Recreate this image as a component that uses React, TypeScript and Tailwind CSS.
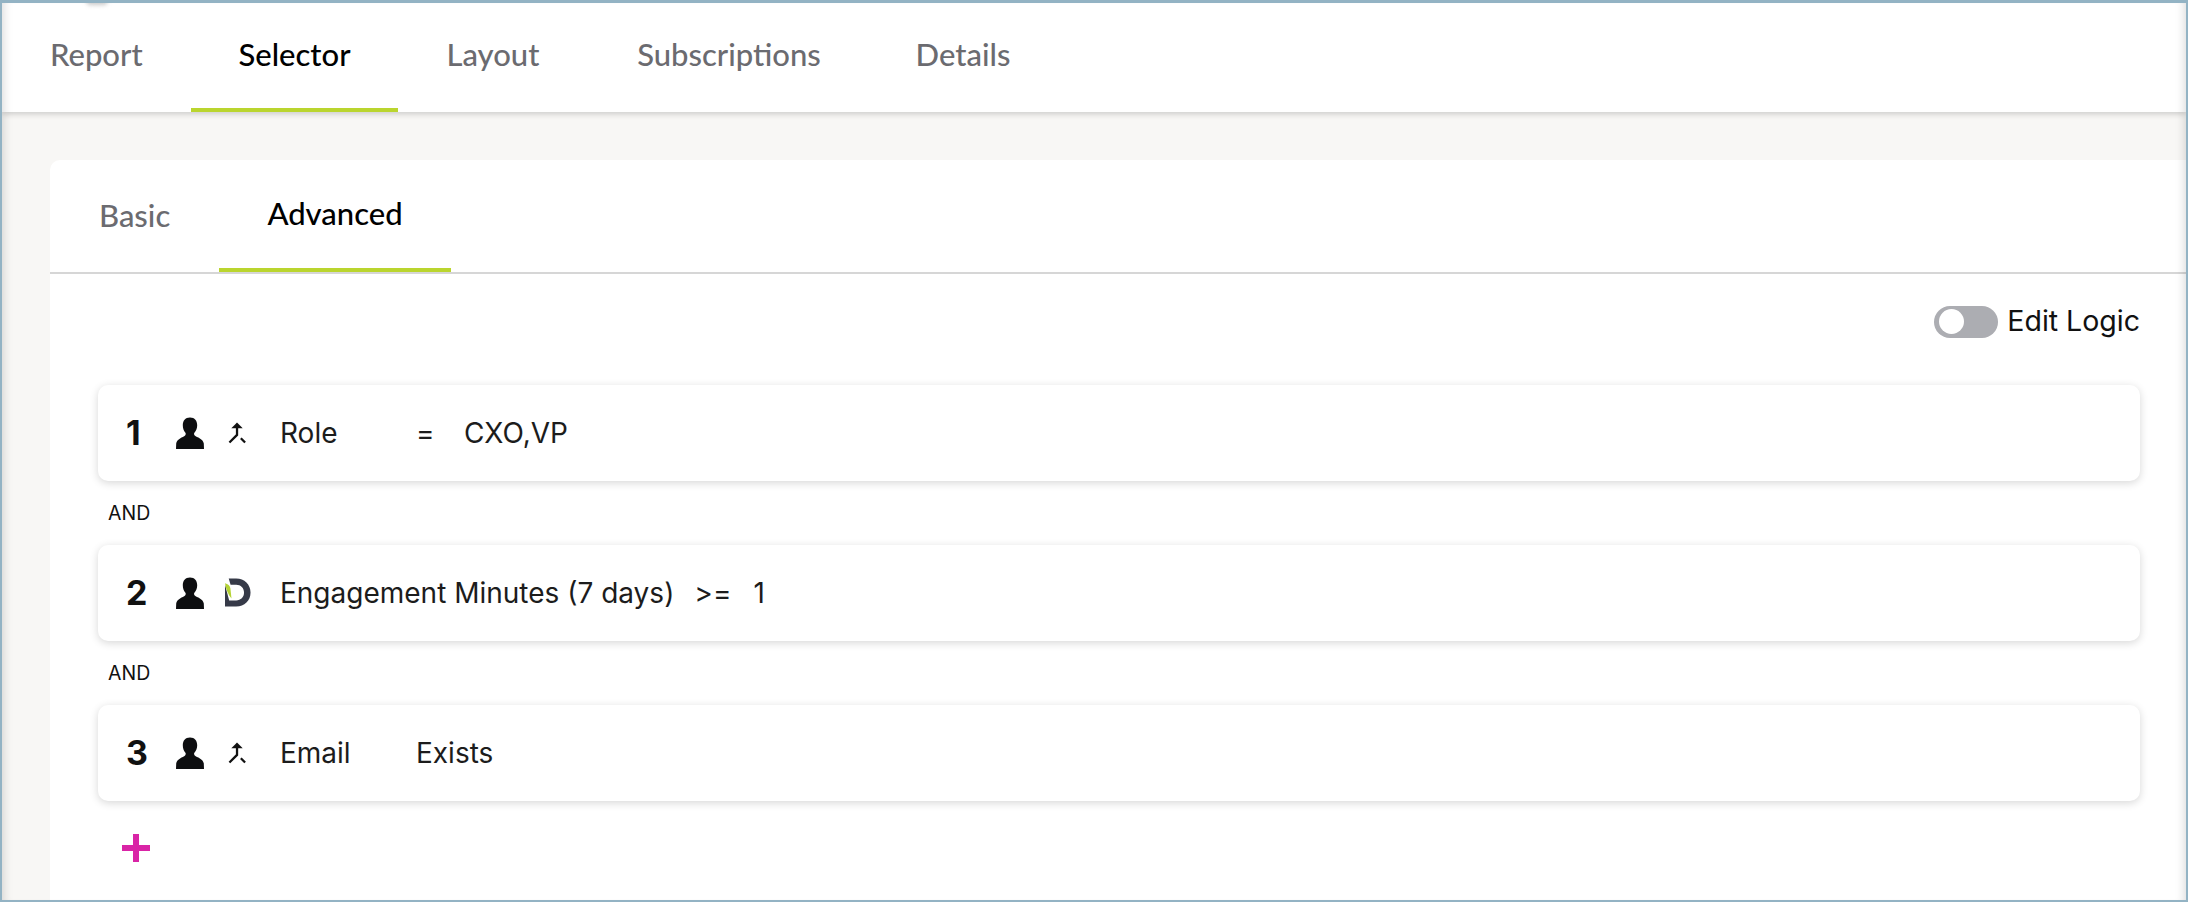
const PersonIcon = () => (
  <svg width="28" height="32" viewBox="0 0 28 32" className="shrink-0">
    <path d="M14 0.500c-4.800 0-7.200 3.200-7.200 7.800 0 3 1 5.700 2.600 7.400 0.500 0.600 0.500 2-0.300 2.700C7 20.300 0.800 21.600 0.200 26.500L0 32h28l-0.200-5.500c-0.600-4.900-6.800-6.200-9.100-8.100-0.800-0.700-0.800-2.100-0.300-2.700 1.600-1.700 2.800-4.400 2.800-7.400 0-4.600-2.400-7.800-7.200-7.800z" fill="#0d0e10" />
  </svg>
);

const MergeIcon = () => (
  <svg width="19" height="23" viewBox="0 0 20 24" className="ml-[2px] shrink-0">
    <path d="M9.500 0.500 L15.500 6.500 H3.500 Z" fill="#111" />
    <path d="M9.500 5 V13.500 L1.500 21.500 M13.500 17 L18 21.500" fill="none" stroke="#111" strokeWidth="2.400" />
  </svg>
);

const LogoIcon = () => (
  <svg width="26" height="30" viewBox="0 0 28 32" className="-ml-[1px] shrink-0">
    <path d="M4 0.500 H12 C21 0.500 27.500 7 27.500 15.500 C27.500 24.500 21 30.500 12 30.500 H0 V7 L4.500 24 H12 C17 24 20.500 20.500 20.500 15.500 C20.500 10.500 17 7 12 7 H6 Z" fill="#363a48" />
    <path d="M0 5.500 C3 6.500 5.500 8 5.800 11 L7 22 C3.500 18 1 12 0 5.500 Z" fill="#b5d334" />
  </svg>
);

const Row = ({ n, icon, label, op, value, labelClass, opClass }: { n: string; icon: React.ReactNode; label: string; op: string; value: string; labelClass: string; opClass: string }) => (
  <div className="flex h-[96px] items-center rounded-[10px] bg-white pl-[28px] shadow-[0_2px_8px_rgba(0,0,0,0.16)]">
    <span className="w-[50px] text-[34px] leading-none font-bold text-[#111]">{n}</span>
    <span className="w-[50px]"><PersonIcon /></span>
    <span className="flex w-[54px] justify-start">{icon}</span>
    <span className={`text-[28px] text-[#1c1c1c] ${labelClass}`}>{label}</span>
    {op && <span className={`text-[28px] text-[#1c1c1c] ${opClass}`}>{op}</span>}
    <span className="text-[28px] text-[#1c1c1c]">{value}</span>
  </div>
);

export default function App() {
  const tabFont = "font-['Lato',sans-serif]";
  return (
    <div className="relative h-[902px] w-[2188px] overflow-hidden border-t-[3px] border-r-[2px] border-b-[2px] border-l-[2px] border-[#93b3c4] bg-[#f8f7f5] font-['Inter',sans-serif]">
      <nav className={`flex h-[109px] items-stretch bg-white pl-[2px] shadow-[0_2px_6px_rgba(0,0,0,0.18)] ${tabFont} text-[31px] font-medium text-[#6b6b70]`}>
        <div className="flex w-[187px] items-center pb-[6px] pl-[46px]">Report</div>
        <div className="flex w-[207px] items-center justify-center border-b-[4px] border-[#bad52e] pb-[2px] text-black">Selector</div>
        <div className="flex w-[190px] items-center justify-center pb-[6px]">Layout</div>
        <div className="flex w-[282px] items-center justify-center pb-[6px]">Subscriptions</div>
        <div className="flex w-[186px] items-center justify-center pb-[6px]">Details</div>
      </nav>

      <main className="mt-[48px] ml-[48px] h-[800px] rounded-tl-[10px] bg-white">
        <div className={`flex h-[114px] items-stretch border-b-[2px] border-[#d6d6d6] ${tabFont} text-[31px] font-medium text-[#6b6b70]`}>
          <div className="flex w-[169px] items-center pb-[2px] pl-[49px]">Basic</div>
          <div className="flex w-[232px] items-center justify-center border-b-[4px] border-[#bad52e] pb-[1px] text-black">Advanced</div>
        </div>

        <div className="pr-[46px] pl-[48px]">
          <div className="flex h-[111px] items-center justify-end gap-[9px] pb-[16px]">
            <span className="flex h-[32px] w-[64px] items-center rounded-full bg-[#acadb2] pl-[5px]">
              <span className="h-[25px] w-[25px] rounded-full bg-white" />
            </span>
            <span className="text-[28.500px] text-[#111]">Edit Logic</span>
          </div>

          <Row n="1" icon={<MergeIcon />} label="Role" labelClass="w-[136px]" op="=" opClass="w-[48px]" value="CXO,VP" />
          <div className="flex h-[64px] items-center pt-[2px] pl-[10px] text-[19.500px] text-[#111]">AND</div>
          <Row n="2" icon={<LogoIcon />} label="Engagement Minutes (7 days)" labelClass="mr-[20px]" op=">=" opClass="mr-[22px]" value="1" />
          <div className="flex h-[64px] items-center pt-[2px] pl-[10px] text-[19.500px] text-[#111]">AND</div>
          <Row n="3" icon={<MergeIcon />} label="Email" labelClass="w-[136px]" op="" opClass="" value="Exists" />

          <div className="pt-[33px] pl-[24px]">
            <svg width="28" height="28" viewBox="0 0 28 28"><path d="M14 0v28M0 14h28" stroke="#d924a6" strokeWidth="6" /></svg>
          </div>
        </div>
      </main>

      <div className="pointer-events-none absolute inset-0 shadow-[inset_10px_0_10px_-8px_rgba(0,0,0,0.14),inset_-10px_0_10px_-8px_rgba(0,0,0,0.14)]" />
      <div className="pointer-events-none absolute top-[-7px] left-[84px] h-[9px] w-[22px] rounded-full bg-[#c9c9c9] blur-[2px]" />
    </div>
  );
}
